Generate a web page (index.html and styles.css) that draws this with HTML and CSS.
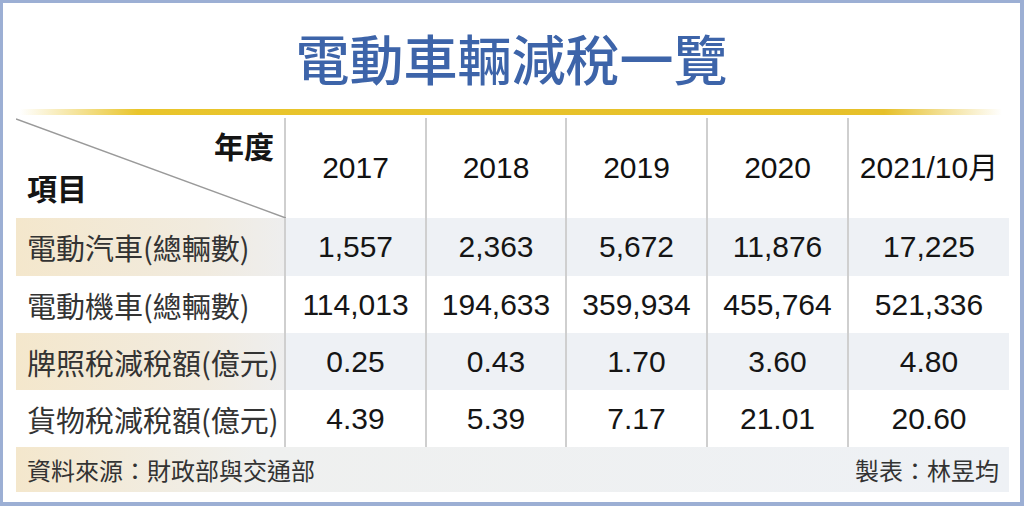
FILE: index.html
```html
<!DOCTYPE html>
<html lang="zh-Hant">
<head>
<meta charset="utf-8">
<title>電動車輛減稅一覽</title>
<link rel="stylesheet" href="styles.css">
</head>
<body>
<div class="frame">
  <div class="title">電動車輛減稅一覽</div>
  <div class="rule"></div>
  <div class="table">
    <div class="cell corner">
      <svg class="diag" width="270" height="100" viewBox="0 0 270 100" preserveAspectRatio="none"><line x1="0" y1="1" x2="270" y2="100" stroke="#9a9a9a" stroke-width="1.6"/></svg>
      <span class="c-year">年度</span>
      <span class="c-item">項目</span>
    </div>
    <div class="cell head">2017</div>
    <div class="cell head">2018</div>
    <div class="cell head">2019</div>
    <div class="cell head">2020</div>
    <div class="cell head last">2021/10月</div>

    <div class="cell label shade">電動汽車(總輛數)</div>
    <div class="cell num shade">1,557</div>
    <div class="cell num shade">2,363</div>
    <div class="cell num shade">5,672</div>
    <div class="cell num shade">11,876</div>
    <div class="cell num shade last">17,225</div>

    <div class="cell label">電動機車(總輛數)</div>
    <div class="cell num">114,013</div>
    <div class="cell num">194,633</div>
    <div class="cell num">359,934</div>
    <div class="cell num">455,764</div>
    <div class="cell num last">521,336</div>

    <div class="cell label shade">牌照稅減稅額(億元)</div>
    <div class="cell num shade">0.25</div>
    <div class="cell num shade">0.43</div>
    <div class="cell num shade">1.70</div>
    <div class="cell num shade">3.60</div>
    <div class="cell num shade last">4.80</div>

    <div class="cell label">貨物稅減稅額(億元)</div>
    <div class="cell num">4.39</div>
    <div class="cell num">5.39</div>
    <div class="cell num">7.17</div>
    <div class="cell num">21.01</div>
    <div class="cell num last">20.60</div>

    <div class="foot">
      <span>資料來源：財政部與交通部</span>
      <span>製表：林昱均</span>
    </div>
  </div>
</div>
</body>
</html>
```

FILE: styles.css
```css
html, body {
  margin: 0;
  padding: 0;
  background: #ffffff;
}
.frame {
  box-sizing: border-box;
  width: 1024px;
  height: 506px;
  border: 3px solid #9cafd4;
  border-right-width: 4px;
  border-bottom-width: 4px;
  background: #ffffff;
  padding: 0 0 0 13px;
  font-family: "Noto Sans CJK TC", "Liberation Sans", sans-serif;
}
.title {
  height: 106px;
  display: flex;
  align-items: center;
  justify-content: center;
  padding-right: 13px;
  padding-top: 3px;
  font-size: 54px;
  font-weight: 500;
  color: #3d64a9;
  line-height: 1;
  box-sizing: border-box;
}
.rule {
  margin-left: 4px;
  width: 982px;
  height: 6px;
  background: linear-gradient(to right, rgba(232,192,40,0) 0%, #e9c52c 12%, #e6c02a 88%, rgba(232,192,40,0) 100%);
}
.table {
  margin-top: 3px;
  width: 993px;
  display: grid;
  grid-template-columns: 270px 141px 140px 141px 141px 160px;
  grid-template-rows: 100px 58px 57px 57px 57px 45px;
}
.cell {
  display: flex;
  align-items: center;
  justify-content: center;
  border-right: 2px solid #cfcfcf;
  box-sizing: border-box;
}
.cell.last {
  border-right: none;
}
.corner {
  position: relative;
  display: block;
}
.diag {
  position: absolute;
  left: 0;
  top: 0;
  display: block;
}
.c-year {
  position: absolute;
  right: 10px;
  top: 9px;
  font-size: 30px;
  font-weight: 700;
  color: #151515;
  line-height: 1.2;
}
.c-item {
  position: absolute;
  left: 11px;
  top: 51px;
  font-size: 30px;
  font-weight: 700;
  color: #151515;
  line-height: 1.2;
}
.head {
  font-family: "Liberation Sans", "Noto Sans CJK TC", sans-serif;
  font-size: 30px;
  color: #111111;
  line-height: 1;
}
.label {
  justify-content: flex-start;
  padding-left: 11px;
  font-size: 29px;
  color: #333333;
  white-space: nowrap;
}
.num {
  font-family: "Liberation Sans", sans-serif;
  font-size: 30px;
  color: #151515;
}
.shade {
  background: #eef1f5;
}
.label.shade {
  background: linear-gradient(to right, #f4e7cc 0%, #f1ebdf 70%, #eeeeee 100%);
}
.foot {
  grid-column: 1 / -1;
  display: flex;
  align-items: center;
  justify-content: space-between;
  padding: 0 10px 0 11px;
  font-size: 24px;
  color: #333333;
  background: linear-gradient(to right, #f4e7cc 0%, #eff0ef 25%, #eef1f5 100%);
}
```
